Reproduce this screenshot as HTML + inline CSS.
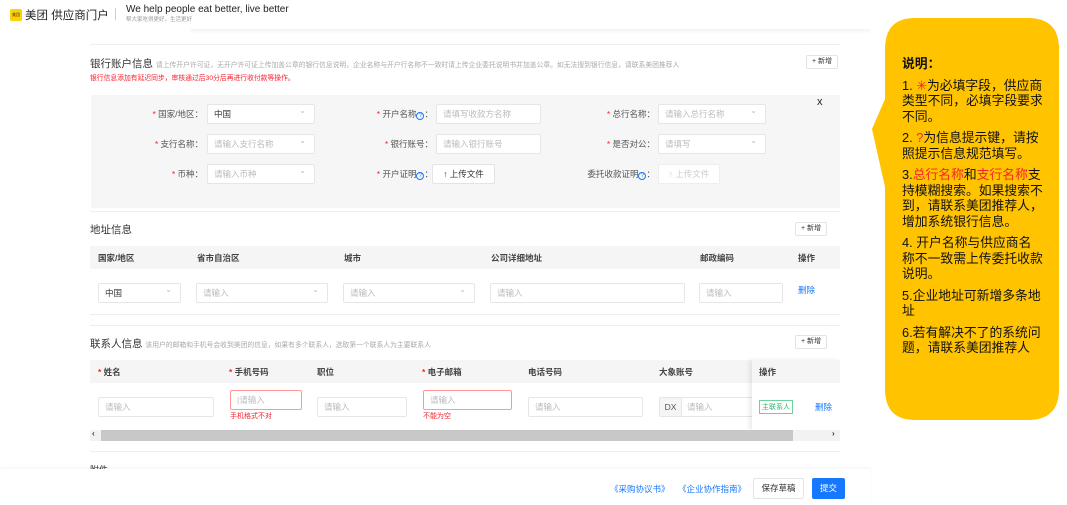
<!DOCTYPE html>
<html><head><meta charset="utf-8"><style>
*{margin:0;padding:0;box-sizing:border-box}
body{width:1067px;height:505px;position:relative;overflow:hidden;background:#fff;font-family:"Liberation Sans","Noto Sans CJK SC",sans-serif;color:#333}
.a{position:absolute;white-space:nowrap}
.in{position:absolute;height:20px;border:1px solid #e6e6e6;border-radius:2px;background:#fff;font-size:8.5px;color:#bbb;padding-left:6px;line-height:18px}
.in.v{color:#333}
.in.s::after{content:"⌄";position:absolute;right:8px;top:-3px;color:#bbb;font-size:8px}
.lab{position:absolute;font-size:8.5px;color:#555;text-align:right;line-height:20px}
.r{color:#f5222d}
.q{display:inline-block;width:8px;height:8px;border:1px solid #1677ff;border-radius:50%;color:#1677ff;font-size:6px;line-height:6px;text-align:center}
.btn{position:absolute;border:1px solid #e3e3e3;border-radius:2px;background:#fff;font-size:7px;text-align:center;color:#333}
.th{position:absolute;font-size:8.5px;font-weight:bold;color:#444}
.bar{position:absolute;left:90px;width:750px;background:#f5f5f5}
.h{position:absolute;left:90px;width:750px;height:1px;background:#eee}
.err{position:absolute;font-size:7px;color:#f5222d}
</style></head><body>
<div class="a" style="left:10px;top:9px;width:12px;height:12px;background:#ffd100;border-radius:2px;font-size:4px;line-height:12px;text-align:center">美团</div>
<div class="a" style="left:25px;top:7px;font-size:11.5px;color:#222">美团 供应商门户</div>
<div class="a" style="left:115px;top:8px;width:1px;height:12px;background:#ccc"></div>
<div class="a" style="left:126px;top:4px;font-size:10px;color:#222">We help people eat better, live better</div>
<div class="a" style="left:126px;top:15px;font-size:5.5px;color:#999">帮大家吃得更好，生活更好</div>
<div class="a" style="left:190px;top:29px;width:680px;height:5px;background:linear-gradient(#f3f3f3,#fff)"></div>
<div class="h" style="top:44px"></div>
<div class="a" style="left:90px;top:56px;font-size:10.5px;color:#333">银行账户信息 <span style="font-size:6.8px;color:#aaa">请上传开户许可证，无开户许可证上传加盖公章的银行信息说明，企业名称与开户行名称不一致时请上传企业委托说明书并加盖公章。如无法搜到银行信息，请联系美团推荐人</span></div>
<div class="a" style="left:90px;top:72px;font-size:6.8px;color:#f5222d">银行信息添加有延迟同步，审核通过后30分后再进行收付款等操作。</div>
<div class="btn" style="left:806px;top:55px;width:32px;height:14px;line-height:12px">+ 新增</div>
<div class="a" style="left:91px;top:95px;width:749px;height:113px;background:#f6f6f6"></div>
<div class="a" style="left:817px;top:96px;font-size:11px;color:#222">x</div>
<div class="lab" style="left:120px;top:104px;width:83px"><span class="r">*</span> 国家/地区：</div>
<div class="in v s" style="left:207px;top:104px;width:108px">中国</div>
<div class="lab" style="left:120px;top:134px;width:83px"><span class="r">*</span> 支行名称：</div>
<div class="in s" style="left:207px;top:134px;width:108px">请输入支行名称</div>
<div class="lab" style="left:120px;top:164px;width:83px"><span class="r">*</span> 币种：</div>
<div class="in s" style="left:207px;top:164px;width:108px">请输入币种</div>
<div class="lab" style="left:340px;top:104px;width:93px"><span class="r">*</span> 开户名称<span class="q">?</span>：</div>
<div class="in" style="left:436px;top:104px;width:105px">请填写收款方名称</div>
<div class="lab" style="left:340px;top:134px;width:93px"><span class="r">*</span> 银行账号：</div>
<div class="in" style="left:436px;top:134px;width:105px">请输入银行账号</div>
<div class="lab" style="left:340px;top:164px;width:93px"><span class="r">*</span> 开户证明<span class="q">?</span>：</div>
<div class="btn" style="left:432px;top:164px;width:63px;height:20px;line-height:18px;font-size:8.5px">↑ 上传文件</div>
<div class="lab" style="left:560px;top:104px;width:95px"><span class="r">*</span> 总行名称：</div>
<div class="in s" style="left:658px;top:104px;width:108px">请输入总行名称</div>
<div class="lab" style="left:560px;top:134px;width:95px"><span class="r">*</span> 是否对公：</div>
<div class="in s" style="left:658px;top:134px;width:108px">请填写</div>
<div class="lab" style="left:560px;top:164px;width:95px">委托收款证明<span class="q">?</span>：</div>
<div class="btn" style="left:658px;top:164px;width:62px;height:20px;line-height:18px;font-size:8.5px;color:#ccc;border-color:#eee">↑ 上传文件</div>
<div class="h" style="top:211px"></div>
<div class="a" style="left:90px;top:222px;font-size:10.5px">地址信息</div>
<div class="btn" style="left:795px;top:222px;width:32px;height:14px;line-height:12px">+ 新增</div>
<div class="bar" style="top:246px;height:23px"></div>
<div class="th" style="left:98px;top:252px">国家/地区</div>
<div class="th" style="left:197px;top:252px">省市自治区</div>
<div class="th" style="left:344px;top:252px">城市</div>
<div class="th" style="left:491px;top:252px">公司详细地址</div>
<div class="th" style="left:700px;top:252px">邮政编码</div>
<div class="th" style="left:798px;top:252px">操作</div>
<div class="in v s" style="left:98px;top:283px;width:83px">中国</div>
<div class="in s" style="left:196px;top:283px;width:132px">请输入</div>
<div class="in s" style="left:343px;top:283px;width:132px">请输入</div>
<div class="in" style="left:490px;top:283px;width:195px">请输入</div>
<div class="in" style="left:699px;top:283px;width:84px">请输入</div>
<div class="a" style="left:798px;top:284px;font-size:8.5px;color:#1677ff">删除</div>
<div class="h" style="top:314px"></div>
<div class="h" style="top:325px"></div>
<div class="a" style="left:90px;top:336px;font-size:10.5px">联系人信息 <span style="font-size:6.8px;color:#aaa">该用户的邮箱和手机号会收到美团的信息，如果有多个联系人，选取第一个联系人为主要联系人</span></div>
<div class="btn" style="left:795px;top:335px;width:32px;height:14px;line-height:12px">+ 新增</div>
<div class="bar" style="top:360px;height:23px"></div>
<div class="th" style="left:98px;top:366px"><span class="r">*</span> 姓名</div>
<div class="th" style="left:229px;top:366px"><span class="r">*</span> 手机号码</div>
<div class="th" style="left:317px;top:366px">职位</div>
<div class="th" style="left:422px;top:366px"><span class="r">*</span> 电子邮箱</div>
<div class="th" style="left:528px;top:366px">电话号码</div>
<div class="th" style="left:659px;top:366px">大象账号</div>
<div class="in" style="left:98px;top:397px;width:116px">请输入</div>
<div class="in" style="left:230px;top:390px;width:72px;border-color:#f99">|请输入</div>
<div class="err" style="left:230px;top:411px">手机格式不对</div>
<div class="in" style="left:317px;top:397px;width:90px">请输入</div>
<div class="in" style="left:423px;top:390px;width:89px;border-color:#f99">请输入</div>
<div class="err" style="left:423px;top:411px">不能为空</div>
<div class="in" style="left:528px;top:397px;width:115px">请输入</div>
<div class="in" style="left:659px;top:397px;width:100px;padding-left:0"><span style="display:inline-block;width:22px;background:#f5f5f5;color:#555;text-align:center;border-right:1px solid #e6e6e6;margin-right:5px">DX</span>请输入</div>
<div class="a" style="left:752px;top:360px;width:88px;height:70px;background:#fff;box-shadow:-3px 0 4px rgba(0,0,0,.08)"></div>
<div class="a" style="left:752px;top:360px;width:88px;height:23px;background:#f5f5f5"></div>
<div class="th" style="left:759px;top:366px">操作</div>
<div class="a" style="left:759px;top:400px;font-size:7px;color:#2bb673;border:1px solid #6cd3a0;padding:1px 2px">主联系人</div>
<div class="a" style="left:815px;top:401px;font-size:8.5px;color:#1677ff">删除</div>
<div class="a" style="left:90px;top:430px;width:750px;height:11px;background:#f2f2f2"></div>
<div class="a" style="left:101px;top:430px;width:692px;height:11px;background:#c8c8c8"></div>
<div class="a" style="left:92px;top:429px;font-size:8px;font-weight:bold">‹</div>
<div class="a" style="left:832px;top:429px;font-size:8px;font-weight:bold">›</div>
<div class="h" style="top:451px"></div>
<div class="a" style="left:90px;top:463px;font-size:9px;color:#333">附件</div>
<div class="a" style="left:0;top:469px;width:870px;height:36px;background:#fff;box-shadow:0 -2px 3px rgba(0,0,0,.04)"></div>
<div class="a" style="left:610px;top:483px;font-size:8.5px;color:#1677ff">《采购协议书》</div>
<div class="a" style="left:678px;top:483px;font-size:8.5px;color:#1677ff">《企业协作指南》</div>
<div class="btn" style="left:753px;top:478px;width:51px;height:21px;line-height:19px;font-size:8.5px">保存草稿</div>
<div class="a" style="left:812px;top:478px;width:33px;height:21px;line-height:21px;font-size:8.5px;background:#1677ff;color:#fff;text-align:center;border-radius:2px">提交</div>
<svg class="a" style="left:868px;top:17px" width="195" height="405"><path d="M47 1 H160 Q191 1 191 32 V372 Q191 403 160 403 H47 Q17 403 17 372 V170 L4 112 L17 82 V32 Q17 1 47 1Z" fill="#ffc300"/></svg>
<div class="a" style="left:902px;top:56px;width:141px;white-space:normal;font-size:12.8px;line-height:15.5px;color:#111">
<div style="font-weight:bold;margin-bottom:6px">说明：</div>
<div style="margin-bottom:6px">1. <span class="r">✳</span>为必填字段，供应商类型不同，必填字段要求不同。</div>
<div style="margin-bottom:6px">2. <span class="r">?</span>为信息提示键，请按照提示信息规范填写。</div>
<div style="margin-bottom:6px">3.<span class="r">总行名称</span>和<span class="r">支行名称</span>支持模糊搜索。如果搜索不到，请联系美团推荐人，增加系统银行信息。</div>
<div style="margin-bottom:6px">4. 开户名称与供应商名称不一致需上传委托收款说明。</div>
<div style="margin-bottom:6px">5.企业地址可新增多条地址</div>
<div>6.若有解决不了的系统问题，请联系美团推荐人</div>
</div>
</body></html>
